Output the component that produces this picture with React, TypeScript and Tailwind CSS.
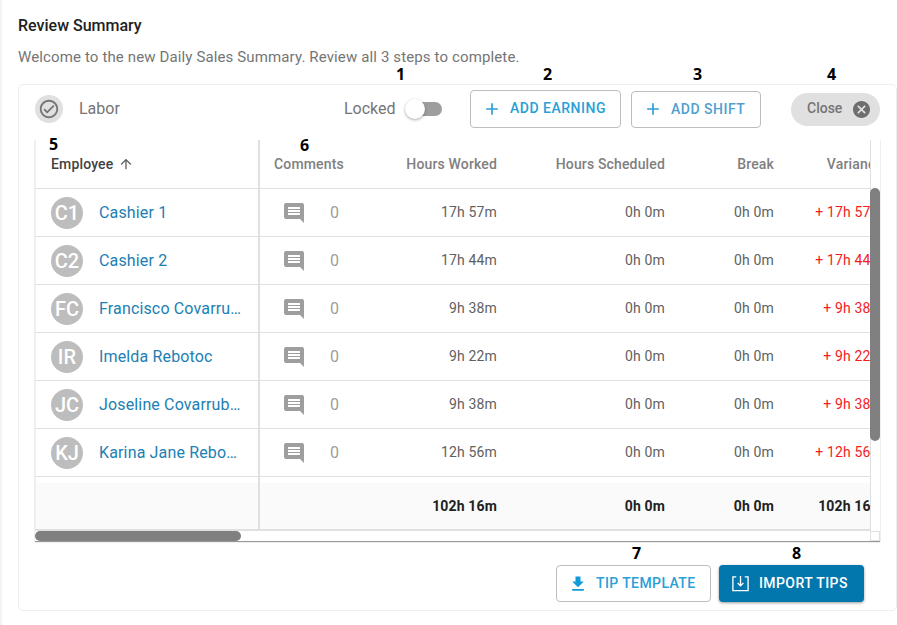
import React from "react";

const rows = [
  { i: "C1", n: "Cashier 1", w: "17h 57m", v: "+ 17h 57m" },
  { i: "C2", n: "Cashier 2", w: "17h 44m", v: "+ 17h 44m" },
  { i: "FC", n: "Francisco Covarrubias", w: "9h 38m", v: "+ 9h 38m" },
  { i: "IR", n: "Imelda Rebotoc", w: "9h 22m", v: "+ 9h 22m" },
  { i: "JC", n: "Joseline Covarrubias", w: "9h 38m", v: "+ 9h 38m" },
  { i: "KJ", n: "Karina Jane Rebotoc", w: "12h 56m", v: "+ 12h 56m" },
];

function Mark({ t, c }: { t: string; c: string }) {
  return (
    <span className={`absolute font-['Open_Sans'] text-[16px] leading-[16px] font-bold text-black ${c}`}>{t}</span>
  );
}

function Plus() {
  return (
    <svg viewBox="0 0 24 24" className="w-[20px] h-[20px] fill-[#2a9fd6] shrink-0">
      <path d="M19 13h-6v6h-2v-6H5v-2h6V5h2v6h6v2z" />
    </svg>
  );
}

function Comment() {
  return (
    <svg viewBox="2 2 20 20" className="w-[20px] h-[20px] fill-[#9e9e9e] shrink-0">
      <path d="M21.99 4c0-1.1-.89-2-1.99-2H4c-1.1 0-2 .9-2 2v12c0 1.1.9 2 2 2h14l4 4-.01-18zM18 14H6v-2h12v2zm0-3H6V9h12v2zm0-3H6V6h12v2z" />
    </svg>
  );
}

export default function App() {
  return (
    <div className="w-[897px] h-[625px] overflow-hidden bg-white font-['Roboto',sans-serif] relative border-l-2 border-[#f3f3f3] pl-[16px] pr-[1px]">
      <h1 className="pt-[16px] text-[16px] leading-[20px] font-medium text-[#212121]">Review Summary</h1>
      <p className="mt-[13px] text-[15px] tracking-[0.13px] leading-[16px] text-[#757575] whitespace-nowrap">
        Welcome to the new Daily Sales Summary. Review all 3 steps to complete.
      </p>

      <div className="mt-[19px] h-[527px] border border-[#eeeeee] rounded-[5px] px-[16px] w-[879px]">
        <div className="h-[47px] mb-[8px] flex items-center">
          <div className="w-[28px] h-[28px] rounded-full bg-[#e0e0e0] flex items-center justify-center shrink-0">
            <svg viewBox="0 0 24 24" className="w-[22px] h-[22px] fill-[#757575]">
              <path d="M12 2C6.48 2 2 6.48 2 12s4.48 10 10 10 10-4.48 10-10S17.52 2 12 2zm0 18c-4.41 0-8-3.59-8-8s3.59-8 8-8 8 3.59 8 8-3.59 8-8 8zm4.59-12.42L10 14.17l-2.59-2.58L6 13l4 4 8-8z" />
            </svg>
          </div>
          <span className="ml-[16px] w-[41px] shrink-0 text-[16px] text-[#757575]">Labor</span>
          <span className="ml-[224px] w-[52px] shrink-0 text-[16px] text-[#757575]">Locked</span>
          <div className="ml-[12px] relative w-[34px] h-[14px] rounded-full bg-[#9e9e9e] shrink-0">
            <div className="absolute left-[-3px] top-[-3px] w-[20px] h-[20px] rounded-full bg-white shadow-[0_1px_3px_rgba(0,0,0,0.35)]" />
          </div>
          <button className="ml-[28px] w-[151px] h-[38px] shrink-0 border border-[#bdbdbd] rounded-[4px] flex items-center pl-[11px] gap-[8px] text-[#2a9fd6] text-[14px] font-medium tracking-[0.5px] whitespace-nowrap">
            <Plus />ADD EARNING
          </button>
          <button className="ml-[10px] w-[130px] h-[37px] shrink-0 mt-[1px] border border-[#bdbdbd] rounded-[4px] flex items-center pl-[11px] gap-[8px] text-[#4f9fd0] text-[14px] font-medium tracking-[0.5px] whitespace-nowrap">
            <Plus />ADD SHIFT
          </button>
          <div className="ml-[30px] w-[89px] h-[33px] shrink-0 mt-[1px] rounded-full bg-[#e0e0e0] flex items-center pl-[16px] text-[14px] font-medium text-[#757575]">
            <span className="mb-[2px]">Close</span>
            <svg viewBox="2 2 20 20" className="ml-[11px] w-[17px] h-[17px] fill-[#6e6e6e] shrink-0">
              <path d="M12 2C6.47 2 2 6.47 2 12s4.47 10 10 10 10-4.47 10-10S17.53 2 12 2zm5 13.59L15.59 17 12 13.41 8.41 17 7 15.59 10.59 12 7 8.41 8.41 7 12 10.59 15.59 7 17 8.41 13.41 12 17 15.59z" />
            </svg>
          </div>
        </div>

        <div className="w-[845px] h-[401px] shadow-[0_1px_1px_rgba(0,0,0,0.4)]">
          <div className="flex h-[391px]">
            <div className="w-[835px] overflow-hidden">
              <div className="flex h-[49px] border-b border-[#e0e0e0] items-center text-[14px] font-medium text-[#808080] tracking-[0.15px] whitespace-nowrap">
                <div className="w-[225px] h-full flex items-center pl-[15px] text-[#424242] border-r-2 border-[#e0e0e0] gap-[5px] shrink-0 border-l border-l-[#f0f0f0]">
                  Employee
                  <svg viewBox="0 0 24 24" className="w-[16px] h-[16px] fill-[#616161]">
                    <path d="M4 12l1.41 1.41L11 7.83V20h2V7.83l5.58 5.59L20 12l-8-8-8 8z" />
                  </svg>
                </div>
                <div className="w-[109px] pl-[14px] shrink-0">Comments</div>
                <div className="w-[128px] text-right shrink-0">Hours Worked</div>
                <div className="w-[168px] text-right shrink-0">Hours Scheduled</div>
                <div className="w-[109px] text-right shrink-0">Break</div>
                <div className="w-[109px] text-right shrink-0">Variance</div>
              </div>

              {rows.map((r) => (
                <div key={r.i} className="flex h-[48px] border-b border-[#e0e0e0] items-center text-[14px] tracking-[0.15px] text-[#616161] whitespace-nowrap">
                  <div className="w-[225px] h-full flex items-center pl-[15px] border-r-2 border-[#e0e0e0] shrink-0 border-l border-l-[#f0f0f0]">
                    <div className="w-[32px] h-[32px] rounded-full bg-[#bdbdbd] text-white text-[20px] font-medium tracking-normal flex items-center justify-center shrink-0">
                      {r.i}
                    </div>
                    <span className="ml-[16px] w-[143px] truncate text-[16px] text-[#1b80b3]">{r.n}</span>
                  </div>
                  <div className="w-[109px] pl-[24px] shrink-0 flex items-center">
                    <Comment />
                    <span className="ml-[26px] text-[16px] text-[#9e9e9e]">0</span>
                  </div>
                  <div className="w-[128px] text-right shrink-0">{r.w}</div>
                  <div className="w-[168px] text-right shrink-0">0h 0m</div>
                  <div className="w-[109px] text-right shrink-0">0h 0m</div>
                  <div className="w-[109px] text-right shrink-0 text-[#f41c1c]">{r.v}</div>
                </div>
              ))}

              <div className="h-[6px] w-[225px] border-r-2 border-l border-r-[#e0e0e0] border-l-[#f0f0f0]" />
              <div className="flex h-[48px] bg-[#fafafa] border-b-2 border-[#e0e0e0] items-center text-[14px] tracking-[0.15px] font-bold text-[#212121] whitespace-nowrap">
                <div className="w-[225px] h-full border-r-2 border-[#e0e0e0] shrink-0 border-l border-l-[#f0f0f0]" />
                <div className="w-[109px] shrink-0" />
                <div className="w-[128px] text-right shrink-0">102h 16m</div>
                <div className="w-[168px] text-right shrink-0">0h 0m</div>
                <div className="w-[109px] text-right shrink-0">0h 0m</div>
                <div className="w-[109px] text-right shrink-0">102h 16m</div>
              </div>
            </div>
            <div className="w-[10px] border-l border-[#e0e0e0] pt-[48px]">
              <div className="ml-[-1px] w-[10px] h-[253px] rounded-[5px] bg-[#808080]" />
            </div>
          </div>
          <div className="flex h-[10px]">
            <div className="w-[835px]">
              <div className="w-[206px] h-[10px] rounded-[5px] bg-[#808080]" />
            </div>
            <div className="w-[10px] border border-[#e0e0e0]" />
          </div>
        </div>

        <div className="flex justify-end mt-[24px] pr-[16px] gap-[8px]">
          <button className="w-[155px] h-[37px] border border-[#bdbdbd] rounded-[4px] flex items-center pl-[11px] gap-[8px] text-[14px] font-medium tracking-[0.4px] text-[#2a9fd6]">
            <svg viewBox="0 0 24 24" className="w-[20px] h-[20px] fill-[#0f9bd7]">
              <path d="M19 9h-4V3H9v6H5l7 7 7-7zM5 18v2h14v-2H5z" />
            </svg>
            TIP TEMPLATE
          </button>
          <button className="w-[145px] h-[37px] rounded-[4px] bg-[#0277ad] flex items-center pl-[12px] gap-[9px] text-[14px] font-medium tracking-[0.4px] text-white shadow-[0_1px_3px_rgba(0,0,0,0.4)]">
            <svg viewBox="0 0 20 20" className="w-[19px] h-[19px] fill-none stroke-white stroke-[1.4]">
              <path d="M5.5 3H2v14.5h16V3h-3.5" />
              <path d="M10 2v10M7 9.5l3 3 3-3" />
            </svg>
            IMPORT TIPS
          </button>
        </div>
      </div>

      <Mark t="1" c="left-[394px] top-[66px]" />
      <Mark t="2" c="left-[541px] top-[66px]" />
      <Mark t="3" c="left-[691px] top-[66px]" />
      <Mark t="4" c="left-[825px] top-[66px]" />
      <Mark t="5" c="left-[47px] top-[136px]" />
      <Mark t="6" c="left-[298px] top-[137px]" />
      <Mark t="7" c="left-[630px] top-[545px]" />
      <Mark t="8" c="left-[790px] top-[545px]" />
    </div>
  );
}
